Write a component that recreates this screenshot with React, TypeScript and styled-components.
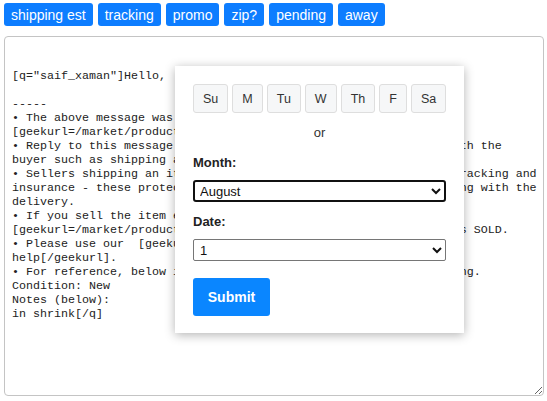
import React from 'react';
import styled, { createGlobalStyle } from 'styled-components';

const GlobalStyle = createGlobalStyle`
	body {
		margin: 0;
		background: #fff;
		font-family: 'Liberation Sans', Arial, sans-serif;
	}
`;

const quickReplies = ['shipping est', 'tracking', 'promo', 'zip?', 'pending', 'away'];
const days = ['Su', 'M', 'Tu', 'W', 'Th', 'F', 'Sa'];
const months = [
	'January',
	'February',
	'March',
	'April',
	'May',
	'June',
	'July',
	'August',
	'September',
	'October',
	'November',
	'December',
];

const message = [
	'',
	'',
	'[q="saif_xaman"]Hello,',
	'',
	'-----',
	'• The above message was sent regarding your listing for',
	'[geekurl=/market/product/295837]this item[/geekurl].',
	'• Reply to this message to communicate any important concerns with the',
	'buyer such as shipping address or payment details.',
	'• Sellers shipping an item outside the U.S. are advised to use tracking and',
	'insurance - these protect both parties in case anything goes wrong with the',
	'delivery.',
	'• If you sell the item elsewhere, please remember to update',
	'[geekurl=/market/product/29583]this item[/geekurl] and mark it as SOLD.',
	'• Please use our  [geekurl=/wiki/page/Marketplace]marketplace',
	'help[/geekurl].',
	'• For reference, below is the condition and notes for your listing.',
	'Condition: New',
	'Notes (below):',
	'in shrink[/q]',
].join('\n');

const App = () => {
	return (
		<Page>
			<GlobalStyle />
			<Toolbar>
				{quickReplies.map(label => (
					<QuickButton key={label}>{label}</QuickButton>
				))}
			</Toolbar>
			<Editor>
				<MessageArea defaultValue={message} spellCheck={false} />
				<Picker>
					<DayRow>
						{days.map(day => (
							<DayButton key={day}>{day}</DayButton>
						))}
					</DayRow>
					<Or>or</Or>
					<FieldLabel>Month:</FieldLabel>
					<Select defaultValue='August' $focused>
						{months.map(m => (
							<option key={m}>{m}</option>
						))}
					</Select>
					<FieldLabel>Date:</FieldLabel>
					<Select defaultValue='1'>
						{Array.from({ length: 31 }, (_, i) => (
							<option key={i}>{i + 1}</option>
						))}
					</Select>
					<SubmitButton>Submit</SubmitButton>
				</Picker>
			</Editor>
		</Page>
	);
};

const Page = styled.div`
	padding: 3px 4px;
`;

const Toolbar = styled.div`
	display: flex;
	gap: 5px;
`;

const QuickButton = styled.button`
	height: 23px;
	padding: 0 7px;
	border: none;
	border-radius: 3px;
	background: #0d7dff;
	color: #fff;
	font-family: 'Liberation Sans', Arial, sans-serif;
	font-size: 14px;
	cursor: pointer;
`;

const Editor = styled.div`
	position: relative;
	margin-top: 10px;
	width: 540px;
	height: 360px;
`;

const MessageArea = styled.textarea`
	box-sizing: border-box;
	width: 100%;
	height: 100%;
	margin: 0;
	padding: 4px 5px 4px 7px;
	border: 1px solid #c4c4c4;
	border-radius: 4px;
	font-family: 'Liberation Mono', 'Courier New', monospace;
	font-size: 11.67px;
	line-height: 14px;
	color: #222;
	white-space: pre;
	overflow: hidden;
	outline: none;
`;

const Picker = styled.div`
	position: absolute;
	left: 171px;
	top: 30px;
	box-sizing: border-box;
	width: 289px;
	padding: 18px 18px 17px;
	background: #fff;
	box-shadow: 0 2px 10px rgba(0, 0, 0, 0.3);
	color: #222;
	font-family: 'Liberation Sans', Arial, sans-serif;
`;

const DayRow = styled.div`
	display: flex;
	gap: 4px;
`;

const DayButton = styled.button`
	height: 29px;
	padding: 0 9px;
	border: 1px solid #dedede;
	border-radius: 3px;
	background: #f6f7f8;
	color: #333;
	font-family: 'Liberation Sans', Arial, sans-serif;
	font-size: 12.5px;
	flex: 0 0 auto;
`;

const Or = styled.div`
	margin: 12px 0 15px;
	text-align: center;
	font-size: 13px;
	line-height: 15px;
	color: #333;
`;

const FieldLabel = styled.div`
	margin-bottom: 10px;
	font-size: 13px;
	line-height: 15px;
	font-weight: bold;
	color: #222;
`;

const Select = styled.select<{ $focused?: boolean }>`
	display: block;
	box-sizing: border-box;
	width: 100%;
	height: 22px;
	margin: 0 0 12px;
	padding: 0 ${p => (p.$focused ? '1px' : '2px')};
	border: ${p => (p.$focused ? '2px solid #111' : '1px solid #767676')};
	border-radius: ${p => (p.$focused ? '3px' : '2px')};
	background: #fff;
	color: #111;
	font-family: 'Liberation Sans', Arial, sans-serif;
	font-size: 13px;
	outline: none;
`;

const SubmitButton = styled.button`
	display: block;
	width: 77px;
	height: 38px;
	margin-top: 17px;
	border: none;
	border-radius: 3px;
	background: #0a86ff;
	color: #fff;
	font-family: 'Liberation Sans', Arial, sans-serif;
	font-size: 14px;
	font-weight: bold;
`;

export default App;
